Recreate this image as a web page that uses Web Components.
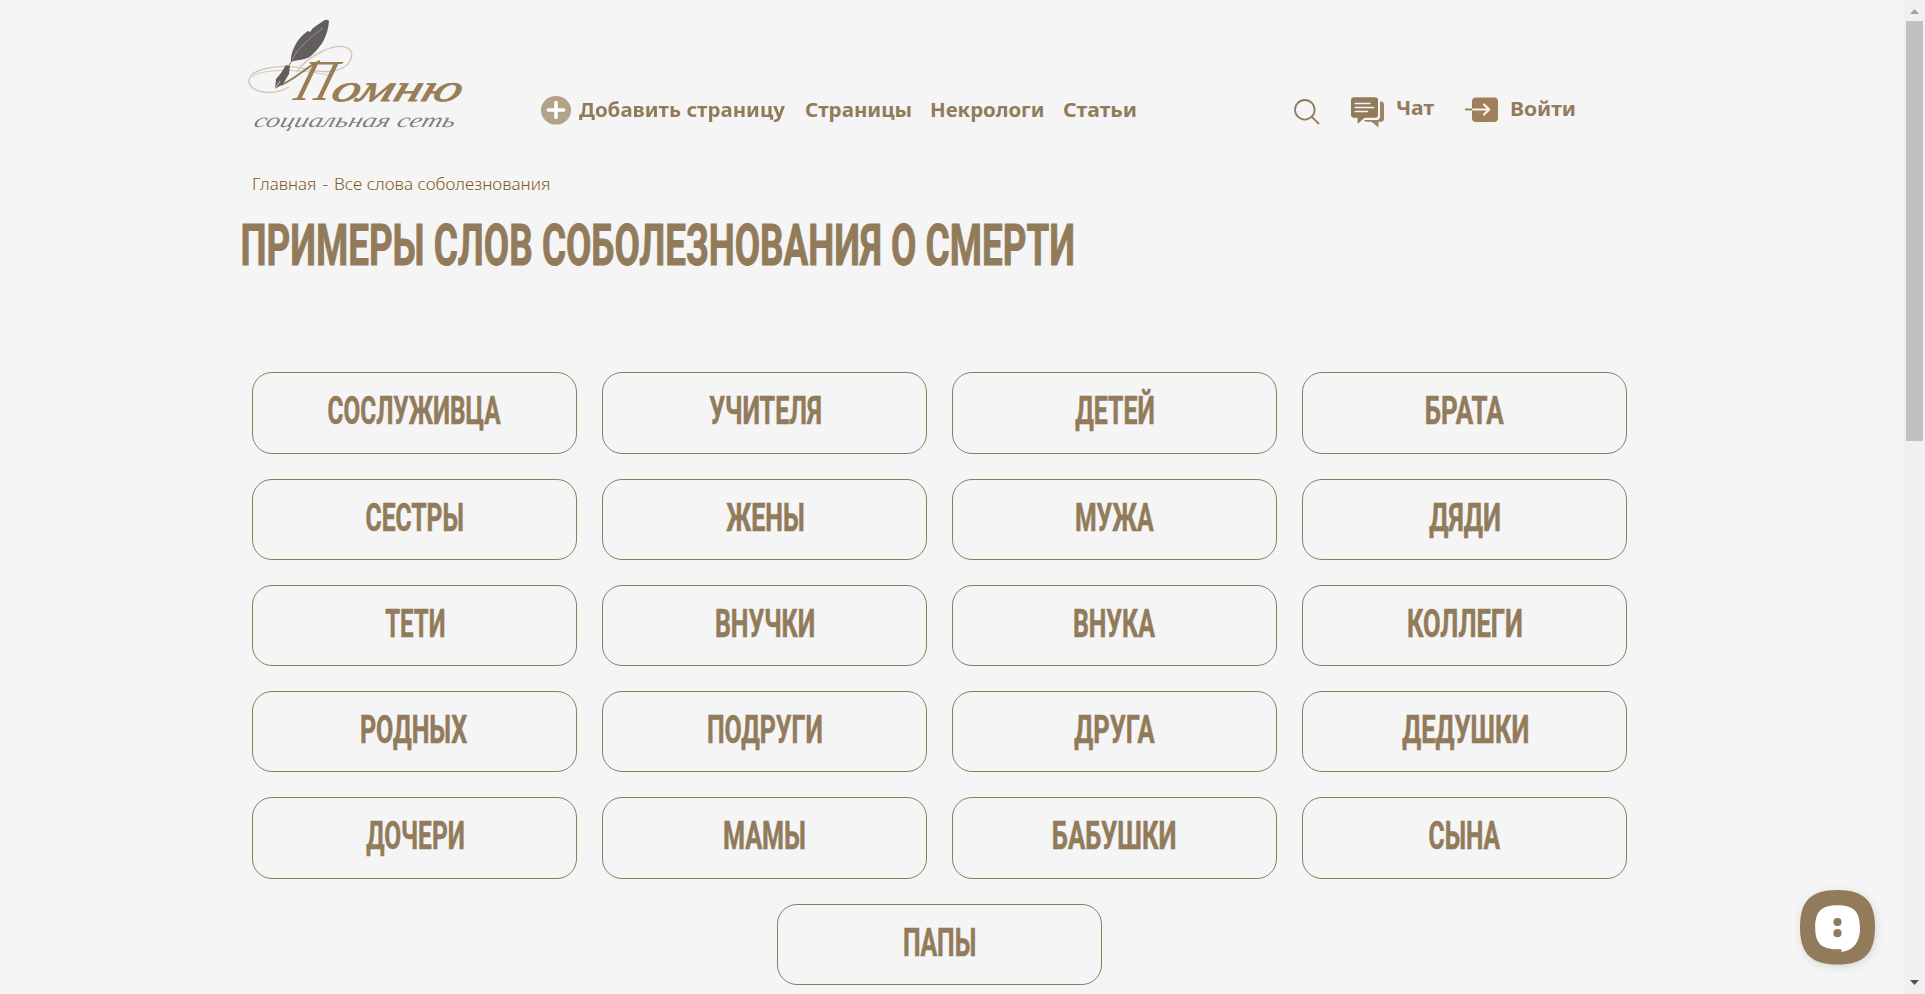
<!DOCTYPE html>
<html lang="ru">
<head>
<meta charset="utf-8">
<title>Примеры слов соболезнования о смерти</title>
<style>
html,body{margin:0;height:100%;overflow:hidden;background:#f5f5f5;color:#927b5b}
body{font-family:"Noto Sans","Open Sans",sans-serif}
</style>
</head>
<body>
<memorial-page></memorial-page>
<script>
const define = (name, html, init) => {
  const tpl = document.createElement('template');
  tpl.innerHTML = html.trim();
  customElements.define(name, class extends HTMLElement {
    constructor() {
      super();
      this.attachShadow({mode: 'open'}).append(tpl.content.cloneNode(true));
    }
    connectedCallback() { if (init) init(this, this.shadowRoot); }
  });
};

/* Text condensed or expanded horizontally so that its ink fills the given width. */
define('fit-text', `
<style>
:host{display:inline-block;vertical-align:top;text-align:left}
span{display:inline-block;transform-origin:0 0;white-space:pre;vertical-align:top}
</style><span><slot></slot></span>`, (host, root) => {
  const ink = parseFloat(host.getAttribute('ink'));
  const span = root.querySelector('span');
  const cs = getComputedStyle(host);
  const ctx = document.createElement('canvas').getContext('2d');
  ctx.font = `${cs.fontStyle} ${cs.fontWeight} ${cs.fontSize} ${cs.fontFamily}`;
  const m = ctx.measureText(host.textContent);
  const stroke = parseFloat(cs.webkitTextStrokeWidth) || 0;
  const left = -m.actualBoundingBoxLeft - stroke / 2;
  const k = ink / (m.actualBoundingBoxRight + stroke / 2 - left);
  host.style.width = ink + 'px';
  span.style.transform = `translateX(${-left * k}px) scaleX(${k})`;
});

define('site-logo', `
<style>
:host{display:block;position:relative;width:230px;height:138px;font-weight:400}
svg{position:absolute;inset:0}
.t{position:absolute;font-family:"Liberation Serif",serif;font-style:italic;line-height:1;transform:skewX(-18deg);transform-origin:0 80%}
.p{left:52px;top:52px;font-size:58px;color:#987d55}
.o{left:91px;top:69px;font-size:38px;color:#987d55;-webkit-text-stroke:.8px #987d55}
.s{left:13px;top:110px;font-size:20px;color:#85807c}
</style>
<svg width="230" height="138" viewBox="0 0 230 138" fill="none">
  <g stroke="#d3c8bb" stroke-width="1.4">
    <path d="M49 87C31 97 11 92 9 82C8 68 42 63 66 69C86 74 104 72 110 61C117 47 101 42 83 51C70 57 61 65 57 72"/>
    <path d="M12 77C25 66 73 71 92 76" stroke-width="1"/>
  </g>
  <path d="M41 85C56 79 67 66 80 61" stroke="#987d55" stroke-width="2"/>
  <path d="M51 62C50 52 58 37 68 31L70 32L73 28C80 24 86 17 89 21C88 35 82 46 72 55C65 61 58 59 51 62Z" fill="#635e5d"/>
  <path d="M52 60L56 53C63 44 73 35 83 28" stroke="#a6a09c" stroke-width=".8"/>
  <path d="M51 62L48 67" stroke="#8f8988" stroke-width="1.2"/>
  <path d="M46 65L50 66L49 74L43 84L35 89L36 79L41 73Z" fill="#635e5d"/>
  <path d="M35 89L40 81" stroke="#e9e6e3" stroke-width=".8"/>
</svg>
<fit-text class="t p" ink="40">П</fit-text>
<fit-text class="t o" ink="128">омню</fit-text>
<fit-text class="t s" ink="201">социальная сеть</fit-text>`);

define('nav-icon', `
<style>:host{display:block;flex:none}svg{display:block;overflow:visible}svg:not(.on){display:none}</style>
<svg data-i="plus" width="30" height="29" viewBox="0 0 30 29"><ellipse cx="15" cy="14.3" rx="15" ry="14.3" fill="#b2a289"/><path d="M15 6.5V21.5M7.3 14H22.7" stroke="#fff" stroke-width="3.6" stroke-linecap="round"/></svg>
<svg data-i="search" width="26" height="26" viewBox="0 0 26 26" fill="none" stroke="#927b5b" stroke-width="1.8"><circle cx="10.8" cy="10.8" r="9.8"/><path d="M17.6 17.6L25 25"/></svg>
<svg data-i="chat" width="33" height="31" viewBox="0 0 33 31"><path d="M29 4.5H30Q33 4.8 33 7.8V21.5Q33 24.6 30 24.8H27.5V30.5L20.5 24.8H15.5Q13.4 24.6 13 23H26Q29 22.6 29 19.5Z" fill="#9c855f"/><path d="M3 .3H24Q27 .3 27 3.3V17.5Q27 20.7 24 20.7H13.5L6.6 27V20.7H3Q0 20.7 0 17.5V3.3Q0 .3 3 .3Z" fill="#927b5b"/><path d="M4.2 6.6H19M4.2 10.6H22.8M4.2 14.5H16.4" stroke="#f5f3ef" stroke-width="1.5" stroke-linecap="round"/></svg>
<svg data-i="login" width="33" height="26" viewBox="0 0 33 26" fill="none" stroke-linecap="round" stroke-linejoin="round"><rect x="7" y=".5" width="26" height="24.5" rx="4" fill="#9f7f59"/><path d="M1 12.5H8" stroke="#9f7f59" stroke-width="2.2"/><path d="M8 12.5H24M19 7.5L24.2 12.5L19 17.5" stroke="#f8f5f1" stroke-width="2.2"/></svg>`,
(host, root) => root.querySelector(`[data-i="${host.getAttribute('name')}"]`).classList.add('on'));

define('site-header', `
<style>
:host{display:flex;height:138px;font-weight:700;font-size:20px;line-height:28px}
nav,.user{display:flex;align-items:flex-start}
nav{margin-left:71px;padding-top:95.5px}
nav fit-text{margin:0 20.4px 0 0}
nav nav-icon{margin-right:8px}
.user{margin-left:138.5px;padding-top:95px}
.user nav-icon{margin-top:4px}
.chat,.in{margin:0 13px 0 31px}
</style>
<site-logo></site-logo>
<nav><nav-icon name="plus"></nav-icon><fit-text ink="206.5">Добавить страницу</fit-text><fit-text ink="105">Страницы</fit-text><fit-text ink="112">Некрологи</fit-text><fit-text ink="71.5">Статьи</fit-text></nav>
<div class="user"><nav-icon name="search"></nav-icon><nav-icon class="chat" name="chat" style="margin-top:1.5px"></nav-icon><fit-text ink="37" style="margin-top:-1.5px">Чат</fit-text><nav-icon class="in" name="login" style="margin-top:2px"></nav-icon><fit-text ink="63.5" style="margin-top:-.5px">Войти</fit-text></div>`);

define('bread-crumbs', `
<style>:host{display:flex;gap:7.5px;font:300 17.2px/24px "Noto Sans","Open Sans",sans-serif;color:#805a25}</style>
<fit-text ink="62">Главная</fit-text><fit-text ink="5">-</fit-text><fit-text ink="214">Все слова соболезнования</fit-text>`);

define('topic-card', `
<style>
:host{display:block;box-sizing:border-box;width:325px;height:81.25px;border:1px solid #927b5b;border-radius:20px;text-align:center;font:700 38.8px/76px Roboto,sans-serif;-webkit-text-stroke:.6px #927b5b}
</style><slot></slot>`);

define('topic-grid', `
<style>:host{display:flex;flex-wrap:wrap;justify-content:center;gap:25px;width:1375px}</style>`, (host, root) => {
  if (root.querySelector('topic-card')) return;
  const topics = [['СОСЛУЖИВЦА',172.7],['УЧИТЕЛЯ',111.7],['ДЕТЕЙ',78.7],['БРАТА',77.7],
    ['СЕСТРЫ',97],['ЖЕНЫ',77.7],['МУЖА',77.7],['ДЯДИ',70.7],
    ['ТЕТИ',59.3],['ВНУЧКИ',98],['ВНУКА',81],['КОЛЛЕГИ',113.7],
    ['РОДНЫХ',106.7],['ПОДРУГИ',113.7],['ДРУГА',80.7],['ДЕДУШКИ',126],
    ['ДОЧЕРИ',97.7],['МАМЫ',81],['БАБУШКИ',122.3],['СЫНА',71.3],['ПАПЫ',71.3]];
  for (const [name, ink] of topics) {
    const card = document.createElement('topic-card');
    const text = document.createElement('fit-text');
    text.setAttribute('ink', ink);
    text.textContent = name;
    card.append(text);
    root.append(card);
  }
});

define('chat-widget', `
<style>:host{position:absolute;left:1800px;top:890.3px}svg{display:block;overflow:visible;filter:drop-shadow(1px 2px 4px rgba(0,0,0,.12))}</style>
<svg width="75" height="75" viewBox="0 0 75 75"><path d="M37.5 0C65 0 75 12 75 37.2S65 74.5 37.5 74.5S0 62.5 0 37.2S10 0 37.5 0Z" fill="#927b5b"/><path d="M37.5 15.3C54 15.3 60 22 60 38C60 52 54 60 41.5 62V59.3H37.5C21 59.3 15.2 53 15.2 37.5S21 15.3 37.5 15.3Z" fill="#fff"/><circle cx="37.5" cy="32" r="4.1" fill="#927b5b"/><circle cx="37.5" cy="43.2" r="4.1" fill="#927b5b"/></svg>`);

define('scroll-rail', `
<style>
:host{display:flex;flex-direction:column;box-sizing:border-box;width:21px;height:994px;padding:0 2px;background:#f0f0f0}
i{display:block;height:420px;background:#c1c1c1}
svg{display:block}.down{margin-top:auto}
</style>
<svg width="17" height="21"><path d="M4 14L8.5 9L13 14Z" fill="#a3a3a3"/></svg><i></i>
<svg class="down" width="17" height="21"><path d="M4 7L8.5 12L13 7Z" fill="#505050"/></svg>`);

define('memorial-page', `
<style>
:host{display:flex;position:relative;width:1925px;height:994px;overflow:hidden;background:#f5f5f5}
main{flex:1;padding-left:240px}
bread-crumbs{margin:33.5px 0 0 13px}
h1{margin:19.5px 0 0 2px;height:60px;font:700 58px/60px Roboto,sans-serif;-webkit-text-stroke:1px #927b5b}
topic-grid{margin:97.4px 0 0 12px}
</style>
<main><site-header></site-header><bread-crumbs></bread-crumbs>
<h1><fit-text ink="831">ПРИМЕРЫ СЛОВ СОБОЛЕЗНОВАНИЯ О СМЕРТИ</fit-text></h1>
<topic-grid></topic-grid></main>
<scroll-rail></scroll-rail><chat-widget></chat-widget>`);
</script>
</body>
</html>
